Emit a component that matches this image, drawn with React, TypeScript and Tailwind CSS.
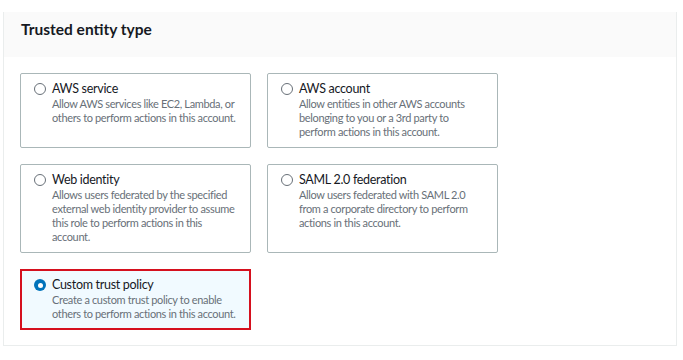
import { useState } from "react";

const OPTIONS = [
  { id: "service", title: "AWS service", desc: "Allow AWS services like EC2, Lambda, or others to perform actions in this account." },
  { id: "account", title: "AWS account", desc: "Allow entities in other AWS accounts belonging to you or a 3rd party to perform actions in this account." },
  { id: "web", title: "Web identity", desc: "Allows users federated by the specified external web identity provider to assume this role to perform actions in this account." },
  { id: "saml", title: "SAML 2.0 federation", desc: "Allow users federated with SAML 2.0 from a corporate directory to perform actions in this account." },
  { id: "custom", title: "Custom trust policy", desc: "Create a custom trust policy to enable others to perform actions in this account." },
];

function Radio({ checked }: { checked: boolean }) {
  if (checked) {
    return (
      <span className="mt-[2px] flex h-[12px] w-[12px] shrink-0 items-center justify-center rounded-full bg-[#0073bb]">
        <span className="h-[5px] w-[5px] rounded-full bg-white" />
      </span>
    );
  }
  return <span className="mt-[2px] h-[12px] w-[12px] shrink-0 rounded-full border border-[#687078] bg-white" />;
}

export default function App() {
  const [selected, setSelected] = useState("custom");

  return (
    <div className="h-[360px] w-[683px] bg-white pt-[12px] pl-[3px]" style={{ fontFamily: 'Lato, "Open Sans", sans-serif' }}>
      <div className="h-[334px] w-[674px] border-x border-b border-[#eaeded]">
        <div className="flex h-[45px] items-center bg-[#fafafa] pb-[10px] pl-[17px]">
          <h2 className="text-[15.5px] font-bold text-[#16191f]">Trusted entity type</h2>
        </div>
        <div className="grid grid-cols-[231px_231px] gap-x-[16px] gap-y-[16px] px-[16px] pt-[16px]">
          {OPTIONS.map((o) => {
            const on = selected === o.id;
            return (
              <button
                key={o.id}
                onClick={() => setSelected(o.id)}
                className={
                  on
                    ? "flex items-start gap-[6px] border-2 border-[#d5101e] bg-[#f1faff] pt-[6px] pr-[11px] pb-[7px] pl-[12px] text-left"
                    : "flex items-start gap-[6px] rounded-[2px] border border-[#aab7b8] bg-white pt-[7px] pr-[12px] pb-[8px] pl-[13px] text-left"
                }
              >
                <Radio checked={on} />
                <div>
                  <div className="text-[12.5px] leading-[16px] tracking-[-0.3px] text-[#16191f]">{o.title}</div>
                  <div className="text-[11px] leading-[14px] tracking-[-0.35px] text-[#687078]">{o.desc}</div>
                </div>
              </button>
            );
          })}
        </div>
      </div>
    </div>
  );
}
